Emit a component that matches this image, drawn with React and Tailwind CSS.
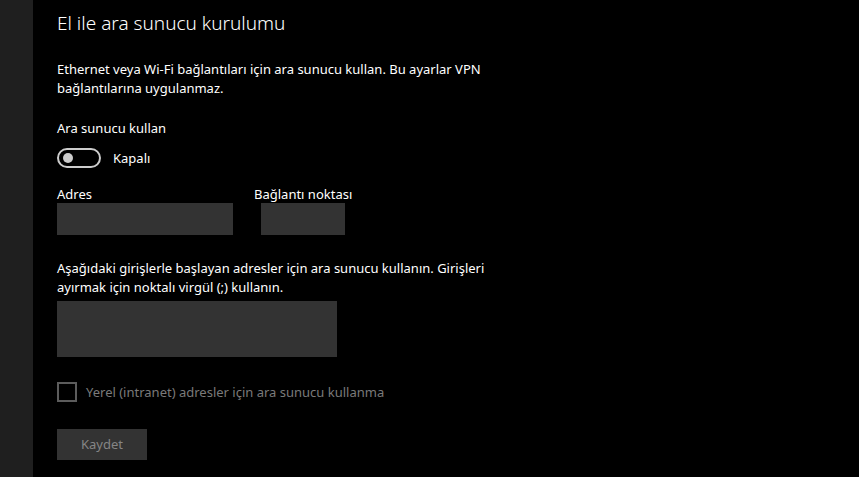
import React from "react";

export default function App() {
  return (
    <div
      className="flex h-[477px] w-[859px] overflow-hidden bg-black text-white"
      style={{ fontFamily: '"Noto Sans", "Open Sans", sans-serif' }}
    >
      {/* Sidebar strip */}
      <div className="w-[33px] shrink-0 bg-[#1f1f1f]" />

      <div className="flex flex-col pl-[24px]">
        <h1 className="mt-[9px] text-[19px] leading-[28px] font-light">
          El ile ara sunucu kurulumu
        </h1>

        <p className="mt-[23px] w-[450px] text-[13px] leading-[19px]">
          Ethernet veya Wi-Fi bağlantıları için ara sunucu kullan. Bu ayarlar VPN
          bağlantılarına uygulanmaz.
        </p>

        <p className="mt-[21px] text-[13px] leading-[19px]">Ara sunucu kullan</p>

        <div className="mt-[10px] flex items-center gap-[12px]">
          <div className="flex h-[20px] w-[44px] items-center rounded-full border-2 border-[#cccccc] pl-[4px]">
            <div className="h-[10px] w-[10px] rounded-full bg-[#cccccc]" />
          </div>
          <span className="text-[13px] leading-[19px]">Kapalı</span>
        </div>

        <div className="mt-[17px] flex gap-[28px]">
          <div className="flex flex-col">
            <span className="text-[13px] leading-[18px]">Adres</span>
            <div className="h-[32px] w-[176px] bg-[#333333]" />
          </div>
          <div className="flex flex-col">
            <span className="-ml-[7px] text-[13px] leading-[18px]">Bağlantı noktası</span>
            <div className="h-[32px] w-[84px] bg-[#333333]" />
          </div>
        </div>

        <p className="mt-[24px] w-[460px] text-[13px] leading-[19px]">
          Aşağıdaki girişlerle başlayan adresler için ara sunucu kullanın. Girişleri
          ayırmak için noktalı virgül (;) kullanın.
        </p>

        <div className="mt-[4px] h-[56px] w-[280px] bg-[#333333]" />

        <div className="mt-[25px] flex items-center gap-[9px]">
          <div className="h-[20px] w-[20px] border-2 border-[#5c5c5c]" />
          <span className="text-[13px] leading-[19px] text-[#7a7a7a]">
            Yerel (intranet) adresler için ara sunucu kullanma
          </span>
        </div>

        <button className="mt-[27px] flex h-[31px] w-[90px] items-center justify-center bg-[#333333] text-[13px] text-[#858585]">
          Kaydet
        </button>
      </div>
    </div>
  );
}
